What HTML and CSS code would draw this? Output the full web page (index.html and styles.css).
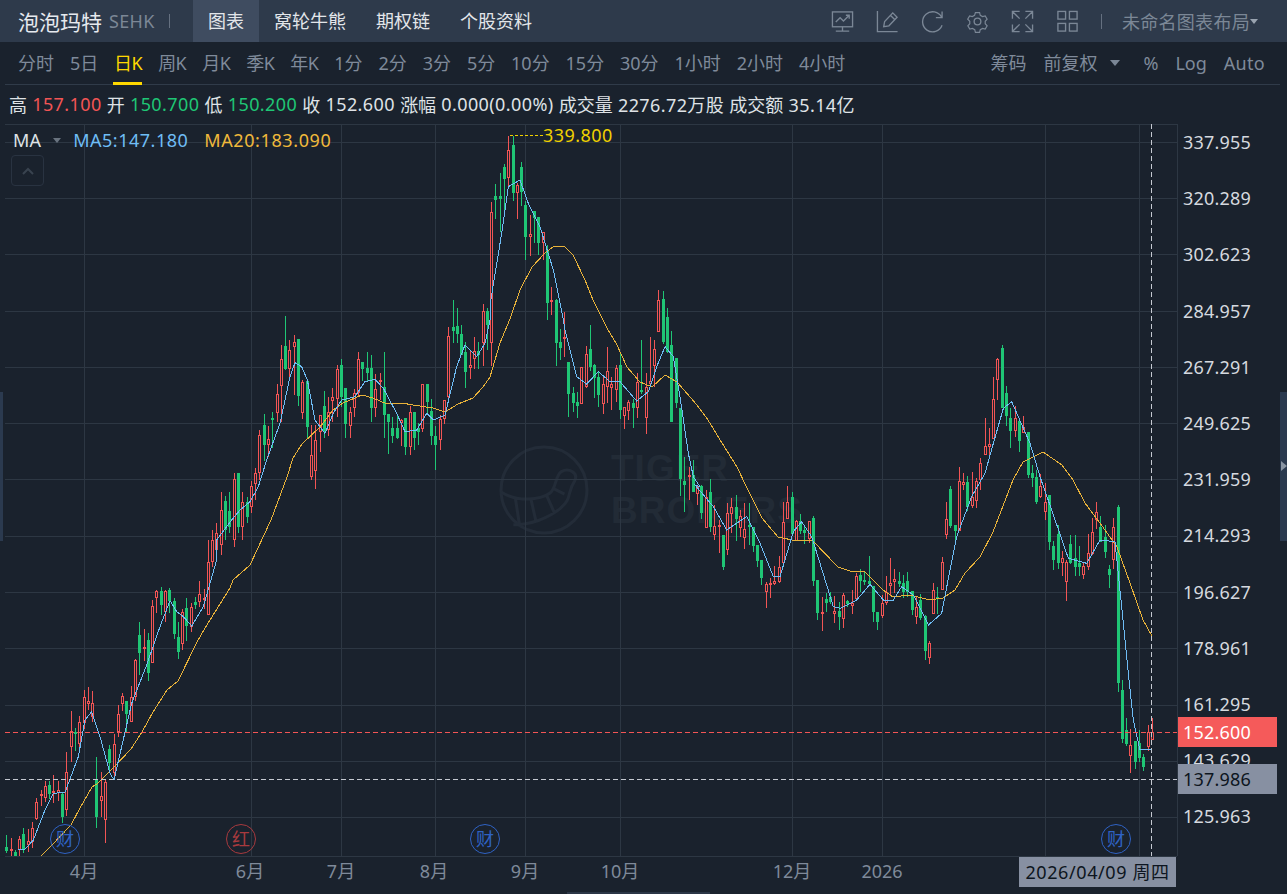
FILE: index.html
```html
<!DOCTYPE html>
<html lang="zh">
<head>
<meta charset="utf-8">
<title>泡泡玛特</title>
<link rel="stylesheet" href="styles.css">
</head>
<body>
<div class="page">
  <header class="topbar">
    <div class="symbol"><span class="name">泡泡玛特</span><span class="market">SEHK</span><span class="bar-sep"></span></div>
    <nav class="tabs">
      <a class="tab active">图表</a><a class="tab">窝轮牛熊</a><a class="tab">期权链</a><a class="tab">个股资料</a>
    </nav>
    <div class="tools">
      <svg class="icon" viewBox="0 0 24 24"><rect x="1.500" y="2" width="21" height="15.500"/><path d="M5 12.500l4.500-4.500 3.500 3.500 6-6M15.500 5.500h3.500v3.500M12 17.500v4M5 22h14"/></svg>
      <svg class="icon" viewBox="0 0 24 24"><path d="M1.500 1v21.500h21M8 17.500l1-5.500 8.500-9 4.500 4.500-8.500 9zM15 5.500l4.500 4.500"/></svg>
      <svg class="icon" viewBox="0 0 24 24"><path d="M21.500 7.500A10.500 10.500 0 1 0 22 16M22 1.500v6.500h-6.500"/></svg>
      <svg class="icon" viewBox="0 0 24 24"><path d="M9.500 1.500h5l.8 3.200 2.700 1.500 3.200-.9 2.300 4-2.300 2.400v3l2.300 2.400-2.300 4-3.200-.9-2.700 1.500-.8 3.200h-5l-.8-3.200-2.700-1.500-3.200.9-2.300-4 2.300-2.400v-3L.3 9.300l2.300-4 3.200.9 2.700-1.500z" transform="translate(1.500 1.500) scale(.875)"/><circle cx="12" cy="12" r="3.500"/></svg>
      <svg class="icon" viewBox="0 0 24 24"><path d="M1.500 9V1.500H9M1.500 1.500L9 9M15 1.500h7.500V9M22.500 1.500L15 9M1.500 15v7.500H9M1.500 22.500L9 15M22.500 15v7.500H15M22.500 22.500L15 15"/></svg>
      <svg class="icon" viewBox="0 0 24 24"><rect x="2" y="1.500" width="8" height="8"/><rect x="14" y="1.500" width="8" height="8"/><rect x="2" y="14" width="8" height="8"/><rect x="14" y="14" width="8" height="8"/></svg>
      <span class="tool-sep"></span>
      <span class="layout">未命名图表布局<i class="caret caret-top"></i></span>
    </div>
  </header>

  <div class="toolbar">
    <div class="periods">
      <a>分时</a><a>5日</a><a class="on k">日K</a><a class="k">周K</a><a class="k">月K</a><a class="k">季K</a><a class="k">年K</a><a>1分</a><a>2分</a><a>3分</a><a>5分</a><a>10分</a><a>15分</a><a>30分</a><a>1小时</a><a>2小时</a><a>4小时</a>
    </div>
    <div class="options">
      <a>筹码</a><a class="adjust">前复权<i class="caret"></i></a><a>%</a><a>Log</a><a class="auto">Auto</a>
    </div>
  </div>

  <div class="quote">
    <span>高</span><b class="up">157.100</b><span>开</span><b class="down">150.700</b><span>低</span><b class="down">150.200</b><span>收</span><b>152.600</b><span>涨幅</span><b>0.000(0.00%)</b><span>成交量</span><b>2276.72万股</b><span>成交额</span><b>35.14亿</b>
  </div>

  <main class="chart">
    <svg class="plot" id="plot" viewBox="0 124 1287 770" aria-hidden="true"></svg>

    <div class="watermark">
      <svg class="wm-logo" viewBox="0 0 88 88"><circle cx="44" cy="44" r="42"/><path d="M2 46C18 56 40 54 50 47C56 42 55 30 61 26C68 22 78 27 74 35C66 47 72 52 60 62C48 72 30 78 14 78M16 52L20 78M31 52L36 74M46 48L54 66M52 42L64 48"/></svg>
      <div class="wm-text">TIGER<br>BROKERS</div>
    </div>

    <div class="legend">
      <span class="ma-name">MA</span><i class="caret small"></i><span class="ma5">MA5:147.180</span><span class="ma20">MA20:183.090</span>
    </div>
    <button class="collapse" type="button"><svg viewBox="0 0 12 8"><path d="M1 7l5-5 5 5"/></svg></button>

    <span class="peak">339.800</span>

    <div class="yaxis">
      <span>337.955</span><span>320.289</span><span>302.623</span><span>284.957</span><span>267.291</span><span>249.625</span><span>231.959</span><span>214.293</span><span>196.627</span><span>178.961</span><span>161.295</span><span>143.629</span><span>125.963</span>
    </div>
    <span class="tag tag-last">152.600</span>
    <span class="tag tag-cross">137.986</span>

    <span class="event blue" style="left:65px">财</span>
    <span class="event red" style="left:241px">红</span>
    <span class="event blue" style="left:485px">财</span>
    <span class="event blue" style="left:1116px">财</span>

    <div class="xaxis">
      <span style="left:84px">4月</span><span style="left:250px">6月</span><span style="left:341px">7月</span><span style="left:434px">8月</span><span style="left:525px">9月</span><span style="left:620px">10月</span><span style="left:792px">12月</span><span style="left:882px">2026</span>
    </div>
    <span class="date-tag">2026/04/09 周四</span>

    <div class="handle handle-left"></div>
    <div class="handle handle-right"><i></i></div>
    <div class="handle-bottom"></div>
  </main>
</div>
<script src="chart.js"></script>
</body>
</html>
```

FILE: styles.css
```css
* { box-sizing: border-box; }
html, body { margin: 0; height: 100%; background: #1a222d; overflow: hidden; }
body { font-family: "Noto Sans", "Noto Sans CJK SC", sans-serif; font-size: 18px; color: #d5d9df; }
a { display: block; }
i { display: inline-block; }

.page { width: 1287px; height: 894px; display: flex; flex-direction: column; }

.topbar { height: 42px; flex: none; background: #2e3a4b; display: flex; align-items: stretch; }
.symbol { display: flex; align-items: center; padding-left: 18px; width: 193px; }
.name { font-size: 21px; color: #e6e9ee; }
.market { font-size: 18px; color: #7c8796; margin-left: 7px; letter-spacing: .3px; }
.bar-sep { width: 1px; height: 14px; background: #657080; margin-left: 14px; }
.tabs { display: flex; }
.tab { line-height: 42px; padding: 0 15px; color: #e3e6ea; }
.tab.active { background: #3f4c60; }
.tools { margin-left: auto; display: flex; align-items: center; padding-right: 29px; color: #7b8796; }
.icon { width: 23px; height: 23px; margin-right: 22px; fill: none; stroke: #7b8796; stroke-width: 1.400; }
.tool-sep { width: 1px; height: 15px; background: #657080; margin-right: 20px; }
.layout { font-size: 18px; display: flex; align-items: center; letter-spacing: .300px; }
.caret { width: 0; height: 0; border: 5px solid transparent; border-top: 6px solid #7b8796; border-bottom: 0; }
.caret-top { border-width: 4px; border-top-width: 5px; border-bottom: 0; border-top-color: #99a3b0; }

.toolbar { height: 43px; flex: none; margin: 0 7px 0 5px; padding: 0 15px 0 13px; border-bottom: 1px solid #303b49; display: flex; justify-content: space-between; align-items: stretch; color: #7f8a9a; }
.periods { display: flex; gap: 15.900px; }
.periods a, .options a { line-height: 42px; }
.periods a.k { letter-spacing: -.5px; }
.periods a.on { color: #ffd800; position: relative; }
.periods a.on::after { content: ""; position: absolute; left: -1px; right: 0; bottom: -1px; height: 3px; background: #ffd800; }
.options { display: flex; gap: 17px; color: #7f8a9a; }
.options .auto { letter-spacing: .3px; }
.adjust { display: flex; align-items: center; gap: 13px; margin-right: 6px; }

.quote { height: 39px; flex: none; padding: 0 0 1px 9px; display: flex; align-items: center; gap: 5.200px; color: #dfe2e6; white-space: nowrap; }
.quote b { font-weight: 400; letter-spacing: .4px; }
.up { color: #f25555; }
.down { color: #1fc675; }

.chart { position: relative; flex: 1; }
.plot { position: absolute; left: 0; top: 0; width: 1287px; height: 770px; z-index: 1; }

.watermark { position: absolute; left: 499px; top: 321px; display: flex; gap: 22px; align-items: center; }
.wm-logo { width: 90px; height: 90px; fill: none; stroke: #232c38; stroke-width: 3; }
.wm-text { font-family: "Liberation Sans", sans-serif; font-size: 37px; line-height: 42px; font-weight: 700; color: #222b36; letter-spacing: 1px; }

.legend { position: absolute; z-index: 2; left: 13px; top: 3px; display: flex; align-items: center; line-height: 26px; }
.ma-name { color: #dfe2e6; letter-spacing: .2px; }
.caret.small { margin: 0 12px; border-width: 4px; border-top-width: 5px; border-bottom: 0; border-top-color: #69737f; }
.ma5 { color: #6fbdf5; margin-right: 16px; letter-spacing: .5px; }
.ma20 { color: #f0b93b; letter-spacing: .6px; }
.collapse { position: absolute; z-index: 2; left: 11px; top: 31px; width: 33px; height: 31px; padding: 0; background: transparent; border: 1px solid #293341; border-radius: 4px; }
.collapse svg { width: 12px; height: 8px; fill: none; stroke: #39434f; stroke-width: 2; display: block; margin: 0 auto; }

.peak { position: absolute; z-index: 2; left: 543px; top: -2px; color: #f0d000; line-height: 26px; letter-spacing: .45px; }

.yaxis { position: absolute; z-index: 2; left: 1178px; top: -10px; width: 99px; display: flex; flex-direction: column; color: #d5d9df; }
.yaxis span { height: 56.200px; line-height: 56px; padding-left: 5px; letter-spacing: .2px; }
.tag { position: absolute; z-index: 3; left: 1178px; width: 99px; height: 30px; line-height: 30px; padding-left: 5px; letter-spacing: .2px; }
.tag-last { top: 593px; background: #f55a5a; color: #fff; }
.tag-cross { top: 640px; background: #8790a2; color: #0d1520; }

.event { position: absolute; z-index: 2; top: 700px; width: 30px; height: 30px; margin-left: -15px; border-radius: 50%; border: 1px solid; text-align: center; line-height: 28px; font-size: 18px; }
.event.blue { color: #2f62c4; }
.event.red { color: #a83a3e; }

.xaxis span { position: absolute; z-index: 2; top: 734px; transform: translateX(-50%); color: #7f8a9a; line-height: 26px; }
.date-tag { position: absolute; z-index: 3; left: 1019px; top: 733px; width: 157px; height: 30px; line-height: 30px; text-align: center; background: #8790a2; color: #0d1520; white-space: nowrap; letter-spacing: .6px; }

.handle { position: absolute; z-index: 2; top: 268px; height: 149px; background: #2b3a4f; }
.handle-left { left: 0; width: 3px; }
.handle-right { right: 0; width: 7px; }
.handle-right i { position: absolute; left: 1px; top: 69px; border: 5px solid transparent; border-left: 6px solid #8a95a3; border-right: 0; }
.handle-bottom { position: absolute; z-index: 2; left: 567px; bottom: 0; width: 143px; height: 2px; background: #2b3646; }
```

FILE: chart.js
```js
(function () {
  var NS = 'http://www.w3.org/2000/svg';
  var svg = document.getElementById('plot');
  var RED = '#f25555', GREEN = '#1fc675', BG = '#1a222d', GRID = '#2d3743';

  function el(name, attrs) {
    var n = document.createElementNS(NS, name);
    for (var k in attrs) n.setAttribute(k, attrs[k]);
    svg.appendChild(n);
    return n;
  }
  function rect(x, y, w, h, fill) {
    el('rect', { x: x, y: y, width: w, height: h, fill: fill, 'shape-rendering': 'crispEdges' });
  }

  /* grid */
  [124, 142, 198, 254, 311, 367, 423, 479, 536, 592, 648, 705, 761, 817, 856].forEach(function (y) {
    rect(5, y, 1172, 1, GRID);
  });
  [84, 251, 341, 435, 525, 620, 792, 882, 1045, 1139, 1177].forEach(function (x) {
    rect(x, 124, 1, 732, GRID);
  });

  /* candles: segments measured as [originX, originY, "c x wickTop bodyTop bodyBottom wickBottom;..."] in 1/3 px */
  var segments = [
    [0, 560, 'g19 825 861 873 878;r34 834 867 873 888;g46 870 876 888 888;r58 828 837 870 888;g70 804 822 868 880;r85 807 843 855 876;r97 786 804 846 864;r109 714 726 777 780;r124 690 702 708 738;r136 663 678 714 726;g148 663 675 702 717;r160 645 693 699 729;r175 663 690 699 723;g187 696 702 771 790;r199 576 636 750 768;r214 453 513 561 606;g226 505 516 522 573;r238 468 486 552 564;r253 390 411 489 507;r265 381 424 431 450;r277 393 430 470 486;g289 591 657 771 804;r304 636 708 723 771;r316 657 666 780 849;g328 555 567 609 639;r343 522 552 639 660;r355 435 462 516 531;r367 399 408 432 453;g379 423 423 462 516;r394 378 411 486 486;r406 297 300 411 423;g418 186 225 279 345;r433 207 261 267 303;g445 219 240 339 363;r457 120 138 308 309;r469 90 93 114 159;g484 81 93 135 165;r496 90 93 156 186;g508 84 90 123 159;g523 114 123 222 237;g535 186 231 276 297;r547 147 156 252 270;g559 114 144 198 243;r574 129 141 201 216;g586 111 126 135 147;r598 63 102 126 141;r613 87 114 120 147;r625 -60 6 165 165;r637 -90 -60 6 21;r650 -110 -80 -30 -5'],
    [200, 300, 'r64 576 630 735 765;g76 588 603 690 720;g88 576 633 680 700;r103 519 537 720 740;g115 519 519 680 700;r127 576 606 680 720;g142 591 606 650 670;r154 543 558 620 640;r166 505 520 552 600;r178 390 405 520 540;g193 342 375 435 483;r205 378 417 435 471;g217 336 354 360 444;r232 252 282 339 366;r244 135 177 258 366;g256 48 138 207 210;r268 120 150 207 240;r283 105 126 141 285;g295 117 117 288 318;r307 240 246 339 357;g322 243 243 381 414;r334 375 465 531 540;r346 375 420 513 567;r361 345 345 396 456;g373 273 318 396 414;r385 291 336 390 408;r397 264 291 303 366;r412 195 207 297 351;g424 177 195 291 321;g436 264 264 372 414;r451 321 336 378 414;r463 267 279 324 351;r475 156 177 279 291;g487 186 186 207 243;g502 156 204 219 246;g514 165 204 324 366;r526 222 267 324 351;r541 219 240 246 300;g553 156 261 345 414;g565 342 342 366 462;g577 351 384 408 429;g592 342 384 414 417;r604 357 360 369 438;g616 354 354 441 465;r631 318 336 441 465;g643 336 336 414 450;g655 369 384 396 435;r667 252 252 387 396;g682 252 252 306 345;g694 297 333 408 435;g706 378 408 435 510;r721 345 357 420 450;r733 300 300 357 372;r745 81 108 291 300;g760 0 81 93 129;g772 24 78 102 129;g784 75 102 165 165;g796 126 156 216 264;r811 150 195 204 237;r823 111 153 177 207;g835 126 153 165 207;r850 12 33 129 198;g862 24 33 75 150'],
    [440, 120, 'r154 245 276 669 738;g166 192 228 240 297;g181 159 228 237 336;g193 132 141 177 273;r205 48 90 174 198;g220 48 75 219 243;r232 189 195 219 297;g244 126 141 216 258;g256 243 255 351 420;r271 285 343 351 408;g283 273 273 294 369;g295 291 291 369 405;r310 336 336 369 420;g322 375 390 549 600;r334 502 540 546 585'],
    [480, 270, 'g229 87 90 219 288;g241 177 216 234 270;r253 126 201 207 261;g265 276 276 372 441;g280 351 369 399 426;g292 366 396 408 444;r304 291 291 402 402;r319 228 252 351 354;g331 165 237 291 303;g343 282 285 324 384;g355 303 321 375 411;r370 315 342 402 432;r382 231 303 351 399;r394 321 342 354 420;r409 285 294 360 396;g421 252 285 420 447;r433 411 411 438 477;r445 390 396 422 450;g460 387 399 414 474;r472 309 336 414 444;g484 210 360 366 372;r499 309 351 444 492;r511 201 333 342 342;r523 210 237 288 351;r535 60 90 186 186;g550 63 87 216 222;g562 114 141 246 249;g574 183 225 456 456;g589 264 264 399 414;g601 414 414 627 678'],
    [680, 470, 'g13 -39 33 45 126;r28 -9 15 21 90;g40 -30 15 66 66;r52 45 48 72 105;g64 45 48 129 147;r79 60 81 174 172;g91 27 66 171 186;r103 105 168 195 210;r118 150 165 171 250;g130 195 195 290 300;r142 100 130 240 255;r154 84 111 132 190;g169 75 111 147 213;r181 120 138 174 200;r193 100 178 204 237;g208 99 165 171 225;g220 170 171 228 246;g232 225 225 273 291;g244 270 270 324 345;r259 335 343 366 414;r271 324 339 345 384;r283 288 333 342 345;r298 258 291 336 339;r310 96 156 279 282;r322 48 96 147 147;g337 66 81 192 186;r349 150 153 213 213;g361 132 153 183 193;g373 168 180 189 222;r388 153 153 207 219;g400 138 144 333 348;g412 330 330 429 450;r427 381 426 432 483;g439 369 387 399 426;g451 366 381 396 402;r463 378 423 432 459;g478 396 423 441 480;r490 369 375 447 474;g502 390 393 402 411;r517 360 399 408 432;r529 309 318 387 387;g541 297 315 333 366;g553 303 330 336 345;g568 258 333 342 345;g580 348 348 426 456;g592 426 426 456 480;r607 375 399 438 444;r619 319 366 399 405;r631 264 339 348 375;r643 297 327 336 369;g658 306 333 342 351;g670 315 339 366 384;g682 306 333 366 381;g697 363 363 420 435;r709 381 411 441 462;g721 372 390 444 450;g736 435 438 543 570;r748 513 519 564 582;r760 339 360 432 432;g772 351 380 383 431;r787 261 276 360 360'],
    [930, 340, 'r49 486 537 585 597;g61 438 447 558 564;g76 555 555 573 600;r88 381 423 573 573;r100 399 426 435 450;g112 408 426 501 513;r127 396 471 498 504;r139 414 423 483 504;r151 354 369 420 450;r166 234 318 345 345;r178 264 312 321 351;r190 111 177 297 297;r202 54 57 120 180;g217 15 24 204 204;g229 138 159 228 258;g241 204 234 273 324;r256 198 234 273 291;g268 234 243 303 336;r280 228 261 279 279;g295 276 276 405 414;g307 375 399 414 441;g319 390 411 486 492;r331 402 438 471 474;r346 429 486 516 540;g358 465 465 606 630;g370 603 618 660 690;g385 555 582 669 687;r397 633 654 669 708;r409 660 666 726 783;g421 585 612 669 672;g436 585 654 681 708;g448 618 669 681 708;r460 669 678 705 717;r475 582 639 681 690;r487 534 576 642 645;r499 486 516 540 567;g511 528 561 606 606;g526 555 591 636 654;g538 675 687 705 744;r550 534 561 660 687;g565 495 501 1029 1056'],
    [1000, 680, 'g367 0 30 177 189;g379 114 150 192 198;r391 147 195 228 279;g406 183 183 246 267;g418 150 189 234 245;g430 222 231 261 273;r445 135 156 201 213;r457 114 156 180 180']
  ];

  segments.forEach(function (s) {
    s[2].split(';').forEach(function (c) {
      var up = c.charAt(0) === 'r';
      var v = c.slice(1).split(' ').map(Number);
      var x = Math.round(s[0] + v[0] / 3 - 0.5);
      var wt = Math.round(s[1] + v[1] / 3), bt = Math.round(s[1] + v[2] / 3);
      var bb = Math.round(s[1] + v[3] / 3), wb = Math.round(s[1] + v[4] / 3);
      var color = up ? RED : GREEN;
      if (bb <= bt) bb = bt + 1;
      if (wt < bt) rect(x, wt, 1, bt - wt, color);
      if (wb > bb) rect(x, bb, 1, wb - bb, color);
      rect(x - 1, bt, 3, bb - bt, color);
      if (up && bb - bt > 2) rect(x, bt + 1, 1, bb - bt - 2, BG);
    });
  });

  /* moving averages */
  function scale(ox, oy, pts) {
    return pts.map(function (p) { return (ox + p[0] / 3) + ',' + (oy + p[1] / 3); });
  }
  var ma5 = [].concat(
    scale(0, 560, [[55, 870], [75, 868], [100, 840], [135, 750], [160, 700], [195, 697], [235, 590], [255, 480], [275, 455], [300, 530], [330, 640], [342, 660], [365, 560], [395, 430], [440, 315], [480, 200], [510, 122], [530, 155], [550, 170], [575, 198], [610, 140], [650, 0]]),
    scale(200, 300, [[50, 720], [95, 660], [120, 630], [150, 605], [175, 560], [200, 480], [240, 370], [270, 230], [285, 188], [305, 200], [322, 240], [345, 360], [375, 400], [400, 340], [425, 300], [465, 290], [495, 245], [525, 238], [550, 265], [590, 340], [615, 395], [650, 390], [680, 340], [700, 360], [735, 345], [770, 200], [795, 135], [830, 170], [855, 130], [870, 60]]),
    scale(440, 120, [[150, 555], [185, 340], [205, 200], [240, 180], [265, 250], [300, 320], [340, 450], [370, 600]]),
    scale(480, 270, [[255, 180], [290, 320], [320, 342], [355, 305], [390, 335], [420, 335], [470, 393], [505, 365], [530, 290], [555, 230], [580, 260], [600, 380], [625, 550], [640, 620], [660, 650]]),
    scale(680, 470, [[45, 45], [100, 110], [140, 180], [200, 140], [240, 220], [280, 320], [300, 320], [340, 185], [365, 155], [395, 200], [420, 280], [460, 410], [480, 415], [530, 390], [570, 343], [610, 390], [640, 390], [665, 350], [700, 375], [745, 465], [785, 430], [810, 300], [830, 200]]),
    scale(930, 340, [[125, 470], [165, 400], [190, 310], [220, 205], [245, 185], [300, 310], [330, 410], [365, 510], [415, 655], [470, 670], [510, 600], [555, 605], [575, 800]]),
    scale(1000, 680, [[387, 0], [400, 120], [420, 210], [455, 208]])
  );
  var ma20 = [
    [41, 856], [51, 846], [71, 825], [80, 808], [92, 787], [97, 784], [113, 768], [131, 749], [142, 732], [153, 712], [167, 690], [178, 681], [197, 642], [205, 628], [230, 588], [233, 580], [250, 565], [271, 520], [287, 477], [293, 458], [302, 444], [320, 427], [333, 410], [343, 403], [362, 395], [373, 398], [387, 404], [402, 403], [413, 405], [433, 408], [445, 412], [458, 404], [473, 398], [483, 387], [490, 377], [500, 343], [510, 319], [520, 290], [532, 267], [545, 253], [553, 247], [564, 246], [573, 255], [585, 280], [593, 300], [607, 328], [617, 345], [627, 367], [640, 382], [652, 387], [665, 375], [677, 382], [697, 405], [708, 420], [722, 443], [737, 467], [747, 488], [762, 518], [778, 537], [797, 541], [812, 540], [838, 567], [850, 571], [865, 572], [883, 590], [893, 597], [910, 595], [930, 600], [943, 598], [955, 590], [965, 573], [980, 557], [993, 532], [1013, 480], [1023, 462], [1043, 452], [1062, 465], [1073, 480], [1085, 503], [1100, 523], [1117, 547], [1130, 583], [1143, 620], [1152, 636]
  ].join(' ');
  el('polyline', { points: ma20, fill: 'none', stroke: '#e8b23a', 'stroke-width': 1, 'shape-rendering': 'crispEdges' });
  el('polyline', { points: ma5.join(' '), fill: 'none', stroke: '#6fbdf5', 'stroke-width': 1, 'shape-rendering': 'crispEdges' });

  /* price and crosshair guides */
  function dashed(x1, y1, x2, y2, color, dash) {
    el('line', { x1: x1, y1: y1, x2: x2, y2: y2, stroke: color, 'stroke-dasharray': dash, 'shape-rendering': 'crispEdges' });
  }
  dashed(5, 732.5, 1177, 732.5, '#f25555', '5 3');
  dashed(5, 779.5, 1177, 779.5, '#c5c9d1', '5 3');
  dashed(1151.5, 124, 1151.5, 856, '#c5c9d1', '5 3');
  dashed(510, 135.5, 543, 135.5, '#f0d000', '3 2');
})();
```
